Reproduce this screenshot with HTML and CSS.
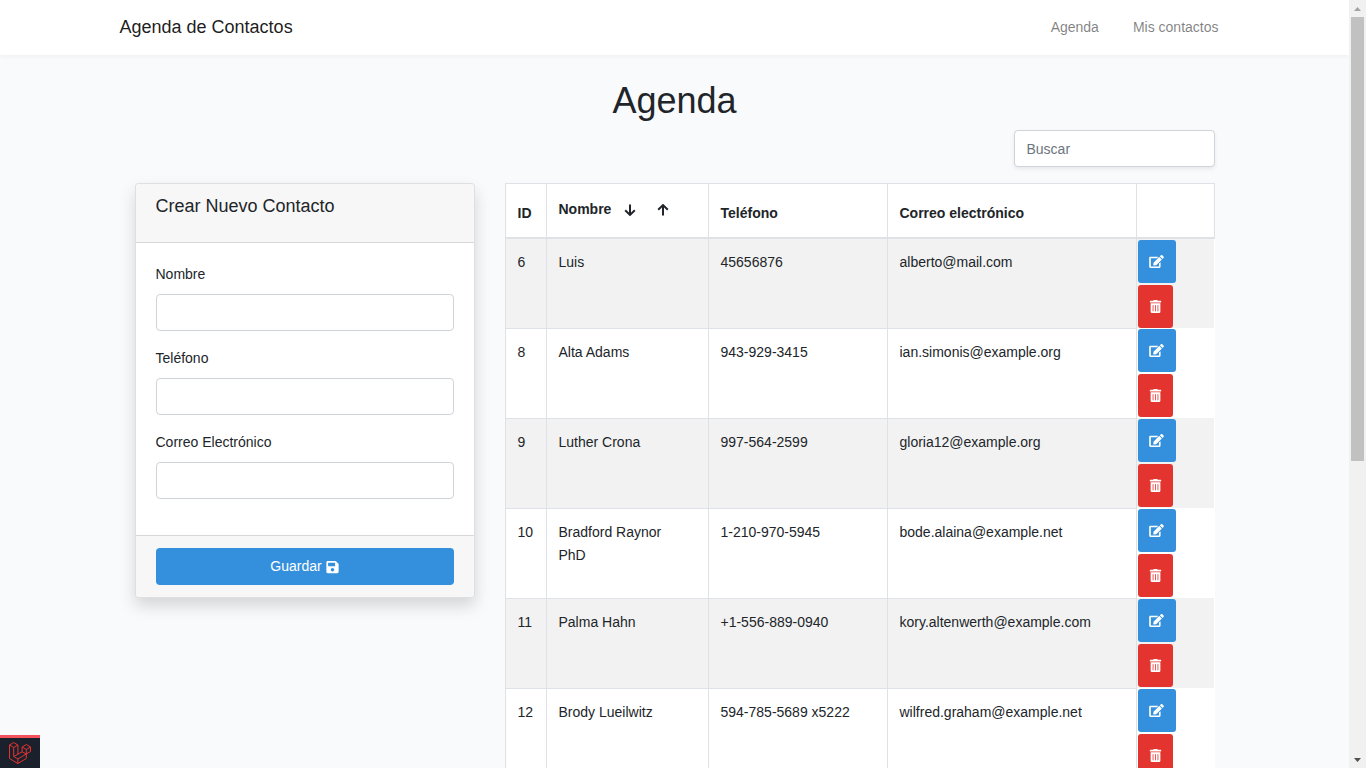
FILE: index.html
```html
<!DOCTYPE html>
<html lang="es">
<head>
<meta charset="utf-8">
<meta name="viewport" content="width=device-width, initial-scale=1">
<title>Agenda de Contactos</title>
<link rel="stylesheet" href="styles.css">
</head>
<body>
<svg class="symbols" aria-hidden="true">
  <symbol id="edit" viewBox="0 0 576 512"><path d="M402.6 83.2l90.2 90.2c3.8 3.8 3.8 10 0 13.8L274.4 405.6l-92.8 10.3c-12.4 1.4-22.9-9.1-21.5-21.5l10.3-92.8L388.8 83.2c3.8-3.8 10-3.8 13.8 0zm162-22.9l-48.8-48.8c-15.2-15.2-39.9-15.2-55.2 0l-35.4 35.4c-3.8 3.8-3.8 10 0 13.8l90.2 90.2c3.8 3.8 10 3.8 13.8 0l35.4-35.4c15.2-15.3 15.2-40 0-55.2zM384 346.2V448H64V128h229.8c3.2 0 6.2-1.3 8.5-3.5l40-40c7.6-7.6 2.2-20.5-8.5-20.5H48C21.5 64 0 85.5 0 112v352c0 26.5 21.5 48 48 48h352c26.5 0 48-21.5 48-48V306.2c0-10.7-12.9-16-20.5-8.5l-40 40c-2.2 2.3-3.5 5.3-3.5 8.5z"/></symbol>
  <symbol id="trash" viewBox="0 0 448 512"><path d="M32 464a48 48 0 0 0 48 48h288a48 48 0 0 0 48-48V128H32zm272-256a16 16 0 0 1 32 0v224a16 16 0 0 1-32 0zm-96 0a16 16 0 0 1 32 0v224a16 16 0 0 1-32 0zm-96 0a16 16 0 0 1 32 0v224a16 16 0 0 1-32 0zM432 32H312l-9.4-18.7A24 24 0 0 0 281.1 0H166.8a23.72 23.72 0 0 0-21.4 13.3L136 32H16A16 16 0 0 0 0 48v32a16 16 0 0 0 16 16h416a16 16 0 0 0 16-16V48a16 16 0 0 0-16-16z"/></symbol>
</svg>
<div class="window">
  <div class="page">
    <header class="navbar">
      <div class="navbar-inner">
        <a class="brand" href="#">Agenda de Contactos</a>
        <nav class="nav">
          <a href="#agenda">Agenda</a>
          <a href="#contactos">Mis contactos</a>
        </nav>
      </div>
    </header>
    <main class="main">
      <h1 class="title">Agenda</h1>
      <div class="search">
        <input class="control search-input" type="search" placeholder="Buscar" aria-label="Buscar">
      </div>
      <div class="columns">
        <form class="card">
          <div class="card-header"><h2 class="card-title">Crear Nuevo Contacto</h2></div>
          <div class="card-body">
            <div class="group"><label for="nombre">Nombre</label><input class="control" id="nombre" type="text"></div>
            <div class="group"><label for="telefono">Teléfono</label><input class="control" id="telefono" type="text"></div>
            <div class="group"><label for="correo">Correo Electrónico</label><input class="control" id="correo" type="email"></div>
          </div>
          <div class="card-footer">
            <button class="save" type="button">Guardar
              <svg class="save-icon" viewBox="0 0 448 512" aria-hidden="true"><path d="M433.941 129.941l-83.882-83.882A48 48 0 0 0 316.118 32H48C21.49 32 0 53.49 0 80v352c0 26.51 21.49 48 48 48h352c26.51 0 48-21.49 48-48V163.882a48 48 0 0 0-14.059-33.941zM224 416c-35.346 0-64-28.654-64-64 0-35.346 28.654-64 64-64s64 28.654 64 64c0 35.346-28.654 64-64 64zm96-304.52V212c0 6.627-5.373 12-12 12H76c-6.627 0-12-5.373-12-12V108c0-6.627 5.373-12 12-12h228.52c3.183 0 6.235 1.264 8.485 3.515l3.48 3.48A11.996 11.996 0 0 1 320 111.48z"/></svg>
            </button>
          </div>
        </form>
        <table class="table">
          <colgroup><col class="c-id"><col class="c-name"><col class="c-phone"><col class="c-mail"><col class="c-actions"></colgroup>
          <thead>
            <tr>
              <th scope="col">ID</th>
              <th scope="col">
                <div class="sort">Nombre
                  <span class="sort-buttons">
                    <button type="button" aria-label="Orden descendente"><svg viewBox="0 0 12 12"><path d="M6 0.500v10.500M1.200 6.200L6 10.900l4.800-4.700"/></svg></button>
                    <button type="button" aria-label="Orden ascendente"><svg viewBox="0 0 12 12"><path d="M6 11.500V1M1.200 5.800L6 1.100l4.800 4.700"/></svg></button>
                  </span>
                </div>
              </th>
              <th scope="col">Teléfono</th>
              <th scope="col">Correo electrónico</th>
              <td></td>
            </tr>
          </thead>
          <tbody>
            <tr><td>6</td><td>Luis</td><td>45656876</td><td>alberto@mail.com</td><td class="actions"><div class="stack"><button class="edit" type="button" aria-label="Editar"><svg><use href="#edit"/></svg></button><button class="delete" type="button" aria-label="Eliminar"><svg><use href="#trash"/></svg></button></div></td></tr>
            <tr><td>8</td><td>Alta Adams</td><td>943-929-3415</td><td>ian.simonis@example.org</td><td class="actions"><div class="stack"><button class="edit" type="button" aria-label="Editar"><svg><use href="#edit"/></svg></button><button class="delete" type="button" aria-label="Eliminar"><svg><use href="#trash"/></svg></button></div></td></tr>
            <tr><td>9</td><td>Luther Crona</td><td>997-564-2599</td><td>gloria12@example.org</td><td class="actions"><div class="stack"><button class="edit" type="button" aria-label="Editar"><svg><use href="#edit"/></svg></button><button class="delete" type="button" aria-label="Eliminar"><svg><use href="#trash"/></svg></button></div></td></tr>
            <tr><td>10</td><td>Bradford Raynor<br>PhD</td><td>1-210-970-5945</td><td>bode.alaina@example.net</td><td class="actions"><div class="stack"><button class="edit" type="button" aria-label="Editar"><svg><use href="#edit"/></svg></button><button class="delete" type="button" aria-label="Eliminar"><svg><use href="#trash"/></svg></button></div></td></tr>
            <tr><td>11</td><td>Palma Hahn</td><td>+1-556-889-0940</td><td>kory.altenwerth@example.com</td><td class="actions"><div class="stack"><button class="edit" type="button" aria-label="Editar"><svg><use href="#edit"/></svg></button><button class="delete" type="button" aria-label="Eliminar"><svg><use href="#trash"/></svg></button></div></td></tr>
            <tr><td>12</td><td>Brody Lueilwitz</td><td>594-785-5689 x5222</td><td>wilfred.graham@example.net</td><td class="actions"><div class="stack"><button class="edit" type="button" aria-label="Editar"><svg><use href="#edit"/></svg></button><button class="delete" type="button" aria-label="Eliminar"><svg><use href="#trash"/></svg></button></div></td></tr>
          </tbody>
        </table>
      </div>
    </main>
  </div>
  <div class="scrollbar" aria-hidden="true">
    <svg class="arrow" viewBox="0 0 17 17"><path fill="#a3a3a3" d="M5 11h7L8.500 7z"/></svg>
    <div class="thumb"></div>
    <div class="track"></div>
    <svg class="arrow" viewBox="0 0 17 17"><path fill="#505050" d="M5 7h7L8.500 11z"/></svg>
  </div>
</div>
<a class="debugbar" href="#debug" aria-label="Debugbar">
  <svg viewBox="0 0 22 22" aria-hidden="true"><path d="M.5 3L4.700.5 8.900 3v9.200l4.200-2.400V5l4.200-2.500L21.500 5v4.500L17.300 12v4.500L8.900 21.500.5 16.500zM.5 3l4.200 2.500L8.900 3M4.700 5.500v9l4.200 2.400 8.400-4.900M8.900 12.200l-4.200 2.300M13.100 5l4.200 2.500L21.500 5M17.300 7.500V12l-4.200-2.200M8.900 16.900v4.600"/></svg>
</a>
</body>
</html>
```
FILE: styles.css
```css
* { box-sizing: border-box; }
body {
  margin: 0;
  background: #f8fafc;
  color: #212529;
  font: 14px/23px "Liberation Sans", Arial, sans-serif;
}
a { color: inherit; text-decoration: none; }
button, input { font: inherit; }
button { padding: 0; border: 0; cursor: pointer; }
h1, h2 { margin: 0; font-weight: 400; }
.symbols { display: none; }

.window { display: flex; height: 100vh; }
.page { flex: 1; min-width: 0; overflow: hidden; }

.navbar { background: #fff; box-shadow: 0 2px 4px rgba(0, 0, 0, .04); }
.navbar-inner {
  display: flex;
  align-items: center;
  justify-content: space-between;
  max-width: 1140px;
  min-height: 55px;
  margin: 0 auto;
  padding: 0 26px 0 15px;
}
.brand { font-size: 18px; color: rgba(0, 0, 0, .9); }
.nav { display: flex; gap: 34px; color: rgba(0, 0, 0, .5); }

.main { max-width: 1140px; margin: 0 auto; padding: 24px 30px; }
.title { margin-bottom: 8px; font-size: 36px; line-height: 43px; text-align: center; }
.search { display: flex; justify-content: flex-end; margin-bottom: 16px; }
.control {
  display: block;
  width: 100%;
  height: 37px;
  padding: 6px 12px;
  border: 1px solid #ced4da;
  border-radius: 4px;
  background: #fff;
  color: #495057;
}
.control::placeholder { color: #6c757d; opacity: 1; }
.search-input { width: 201px; box-shadow: 0 2px 4px rgba(0, 0, 0, .075); }

.columns { display: grid; grid-template-columns: 340fr 710fr; gap: 30px; align-items: start; }
.card {
  border: 1px solid rgba(0, 0, 0, .125);
  border-radius: 4px;
  background: #fff;
  box-shadow: 0 8px 16px rgba(0, 0, 0, .15);
}
.card-header { padding: 12px 20px; border-bottom: 1px solid rgba(0, 0, 0, .125); background: #f7f7f7; border-radius: 3px 3px 0 0; }
.card-title { margin-bottom: 14px; font-size: 18px; line-height: 20px; }
.card-body { padding: 20px; }
.group { margin-bottom: 16px; }
.group label { display: block; margin-bottom: 8px; }
.card-footer { padding: 12px 20px; border-top: 1px solid rgba(0, 0, 0, .125); background: #f7f7f7; border-radius: 0 0 3px 3px; }
.save {
  display: flex;
  align-items: center;
  justify-content: center;
  gap: 4px;
  width: 100%;
  height: 37px;
  border-radius: 4px;
  background: #3490dc;
  color: #fff;
}
.save-icon { width: 13px; height: 14px; fill: currentColor; }

.table { width: 100%; table-layout: fixed; border-collapse: collapse; background: #fff; }
.c-id { width: 41px; }
.c-name { width: 162px; }
.c-phone { width: 179px; }
.c-mail { width: 249px; }
.c-actions { width: 78px; }
.table th, .table td { padding: 12px; border: 1px solid #dee2e6; text-align: left; vertical-align: top; }
.table thead th, .table thead td { vertical-align: bottom; border-bottom-width: 2px; }
.table tbody tr:nth-child(odd) { background: #f2f2f2; }
.table .actions { padding: 1px; border-width: 0 0 0 1px; }
.table tr:first-child .actions { padding-bottom: 0; }
.sort { display: flex; padding: 2px 0 4px; }
.sort-buttons { display: flex; margin-left: 2px; }
.sort-buttons button { display: flex; align-items: center; justify-content: center; width: 33px; background: none; }
.sort-buttons svg { width: 12px; height: 12px; fill: none; stroke: #212529; stroke-width: 2; }
.stack { display: flex; flex-direction: column; align-items: flex-start; gap: 2px; }
.edit, .delete { display: flex; align-items: center; justify-content: center; height: 43px; border-radius: 3px; color: #fff; }
.edit { width: 38px; background: #3490dc; }
.delete { width: 35px; background: #e3342f; }
.stack svg { width: 15px; height: 13px; fill: currentColor; }

.scrollbar { display: flex; flex-direction: column; width: 17px; background: #f1f1f1; }
.arrow { width: 17px; height: 17px; }
.thumb { flex: 444; margin: 0 2px; background: #c1c1c1; }
.track { flex: 290; }

.debugbar {
  position: fixed;
  bottom: 0;
  left: 0;
  display: flex;
  align-items: center;
  justify-content: center;
  width: 40px;
  height: 33px;
  border-top: 3px solid #f4525c;
  background: #1b212c;
}
.debugbar svg { width: 22px; height: 22px; fill: none; stroke: #e3342f; stroke-width: 1; }
```
